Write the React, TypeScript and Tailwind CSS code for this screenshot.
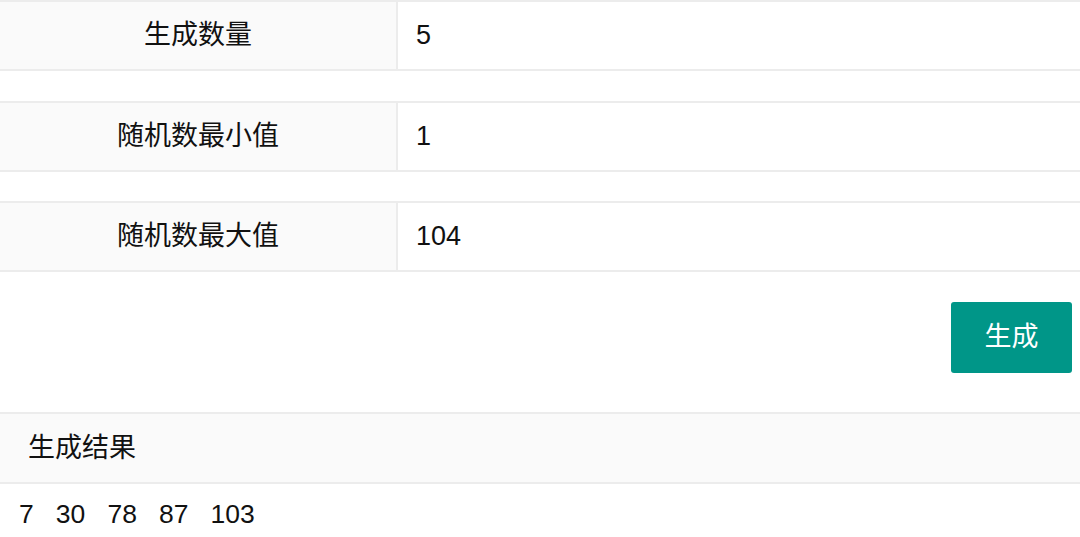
import React from "react";

const fields = [
  { label: "生成数量", value: "5" },
  { label: "随机数最小值", value: "1" },
  { label: "随机数最大值", value: "104" },
];

const results = [7, 30, 78, 87, 103];

export default function App() {
  return (
    <div className="w-[1080px] h-[537px] overflow-hidden bg-white text-[27px] text-[#111] font-['Liberation_Sans','Noto_Sans_CJK_SC',sans-serif]">
      <div className="flex flex-col gap-[29.5px]">
        {fields.map((f) => (
          <div key={f.label} className="flex h-[71px] border-y-2 border-[#ececec]">
            <label className="w-[398px] shrink-0 flex items-center justify-center bg-[#fafafa] border-r-2 border-[#ececec]">
              {f.label}
            </label>
            <input
              defaultValue={f.value}
              className="flex-1 min-w-0 pl-[18px] bg-white outline-none"
            />
          </div>
        ))}
      </div>

      <div className="flex justify-end pr-[8px] mt-[30px]">
        <button className="w-[121px] h-[71px] rounded-[3px] bg-[#009688] text-white text-[27px]">
          生成
        </button>
      </div>

      <div className="mt-[39px]">
        <div className="h-[72px] flex items-center pl-[28px] bg-[#fafafa] border-y-2 border-[#ececec]">
          生成结果
        </div>
        <div className="px-[19px] pt-[10px] leading-[40px] text-[26.5px]">
          {results.map((n, i) => (
            <span key={i}>
              {n}
              {i < results.length - 1 ? "\u00a0\u00a0\u00a0" : ""}
            </span>
          ))}
        </div>
      </div>
    </div>
  );
}
